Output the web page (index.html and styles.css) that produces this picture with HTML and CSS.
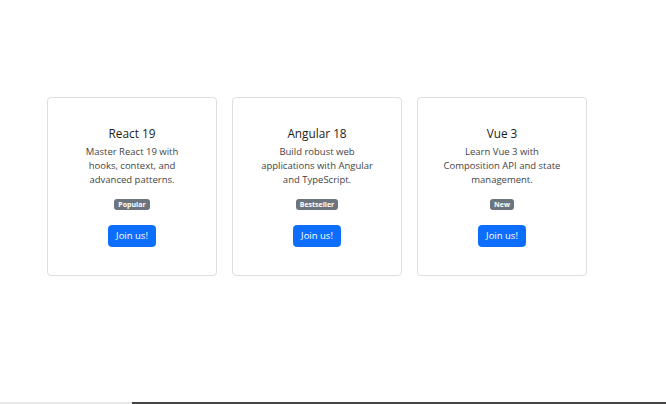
FILE: index.html
```html
<!DOCTYPE html>
<html lang="en">
<head>
<meta charset="utf-8">
<title>Courses</title>
<link rel="stylesheet" href="styles.css">
</head>
<body>
<main class="page">
  <section class="cards">
    <article class="card">
      <h5 class="card-title">React 19</h5>
      <p class="card-text">Master React 19 with hooks, context, and advanced patterns.</p>
      <div class="badge-row"><span class="badge">Popular</span></div>
      <button class="btn">Join us!</button>
    </article>
    <article class="card">
      <h5 class="card-title">Angular 18</h5>
      <p class="card-text">Build robust web applications with Angular and TypeScript.</p>
      <div class="badge-row"><span class="badge">Bestseller</span></div>
      <button class="btn">Join us!</button>
    </article>
    <article class="card">
      <h5 class="card-title">Vue 3</h5>
      <p class="card-text">Learn Vue 3 with Composition API and state management.</p>
      <div class="badge-row"><span class="badge">New</span></div>
      <button class="btn">Join us!</button>
    </article>
  </section>
</main>
<div class="bottom-bar"><span class="bar-light"></span><span class="bar-dark"></span></div>
</body>
</html>
```
FILE: styles.css
```css
* { box-sizing: border-box; }
html, body { margin: 0; padding: 0; }
body {
  height: 404px;
  display: flex;
  flex-direction: column;
  font-family: "Open Sans", "Noto Sans", sans-serif;
  font-size: 9.5px;
  line-height: 14px;
  color: #212529;
  background: #fff;
  overflow: hidden;
}
.page {
  flex: 1;
  padding: 97px 0 0 47px;
}
.cards {
  display: flex;
  gap: 15px;
}
.card {
  width: 170px;
  height: 179px;
  border: 1px solid #dcdfe3;
  border-radius: 4px;
  padding: 28px 24px;
  display: flex;
  flex-direction: column;
  align-items: center;
  text-align: center;
}
.card-title {
  margin: 0 0 5px;
  font-size: 11.8px;
  line-height: 14px;
  font-weight: 500;
  color: #1a1d20;
}
.card-text {
  margin: 0 0 12px;
  color: #444;
}
.badge-row { display: flex; justify-content: center; }
.badge {
  display: inline-block;
  background: #6c757d;
  color: #fff;
  font-weight: 700;
  font-size: 7px;
  line-height: 7px;
  padding: 2px 4px;
  border-radius: 3px;
}
.btn {
  margin-top: 15px;
  font-family: inherit;
  font-size: 9.5px;
  line-height: 14px;
  color: #fff;
  background: #0d6efd;
  border: 1px solid #0d6efd;
  border-radius: 3.5px;
  padding: 3px 7px;
  height: 22px;
}
.bottom-bar {
  height: 2px;
  display: flex;
  flex-shrink: 0;
}
.bar-light { width: 132px; background: #e8e8e8; }
.bar-dark { flex: 1; background: #444; }
```
